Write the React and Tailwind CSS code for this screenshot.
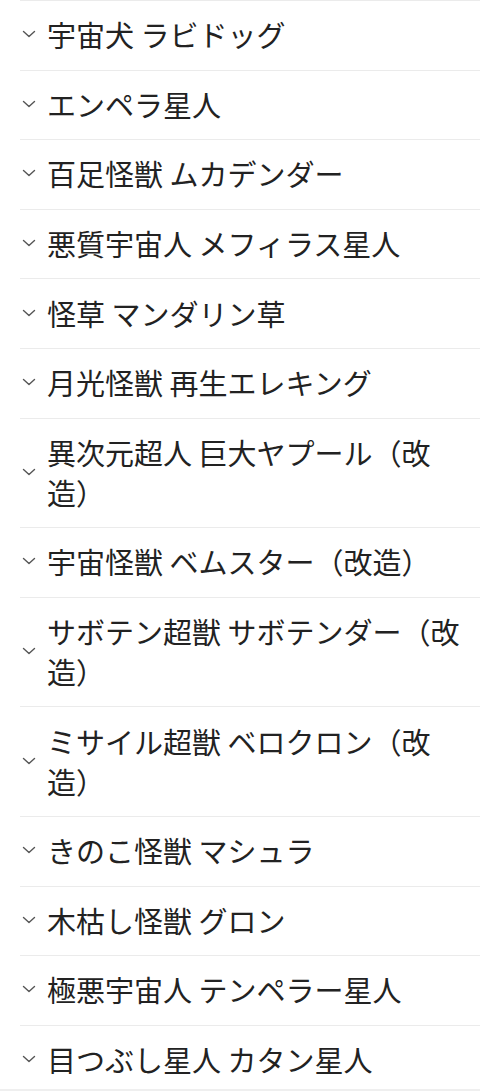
import React from 'react';

const monsters = [
  '宇宙犬 ラビドッグ',
  'エンペラ星人',
  '百足怪獣 ムカデンダー',
  '悪質宇宙人 メフィラス星人',
  '怪草 マンダリン草',
  '月光怪獣 再生エレキング',
  '異次元超人 巨大ヤプール（改造）',
  '宇宙怪獣 ベムスター（改造）',
  'サボテン超獣 サボテンダー（改造）',
  'ミサイル超獣 ベロクロン（改造）',
  'きのこ怪獣 マシュラ',
  '木枯し怪獣 グロン',
  '極悪宇宙人 テンペラー星人',
  '目つぶし星人 カタン星人',
];

const Chevron = () => (
  <svg viewBox="0 0 14 8" className="w-[14px] h-[8px] shrink-0 ml-[2px]" fill="none">
    <path d="M1.5 1.5 L7 6.5 L12.5 1.5" stroke="#555" strokeWidth="1.4" strokeLinecap="round" strokeLinejoin="round" />
  </svg>
);

const App = () => {
  return (
    <div className="min-h-screen bg-white" style={{ fontFamily: '"Noto Sans CJK JP", "Noto Sans", sans-serif' }}>
      <ul className="ml-[20px] border-t border-[#ebebeb]">
        {monsters.map((name, i) => (
          <li key={i} className="flex items-center border-b border-[#ebebeb] pt-[13.3px] pb-[15.3px]">
            <Chevron />
            <span className="ml-[11px] pr-[20px] text-[29px] leading-[40px] text-[#222]">{name}</span>
          </li>
        ))}
      </ul>
      <div className="fixed bottom-0 left-0 right-0 h-[2px] bg-[#efefef]" />
    </div>
  );
};

export default App;
